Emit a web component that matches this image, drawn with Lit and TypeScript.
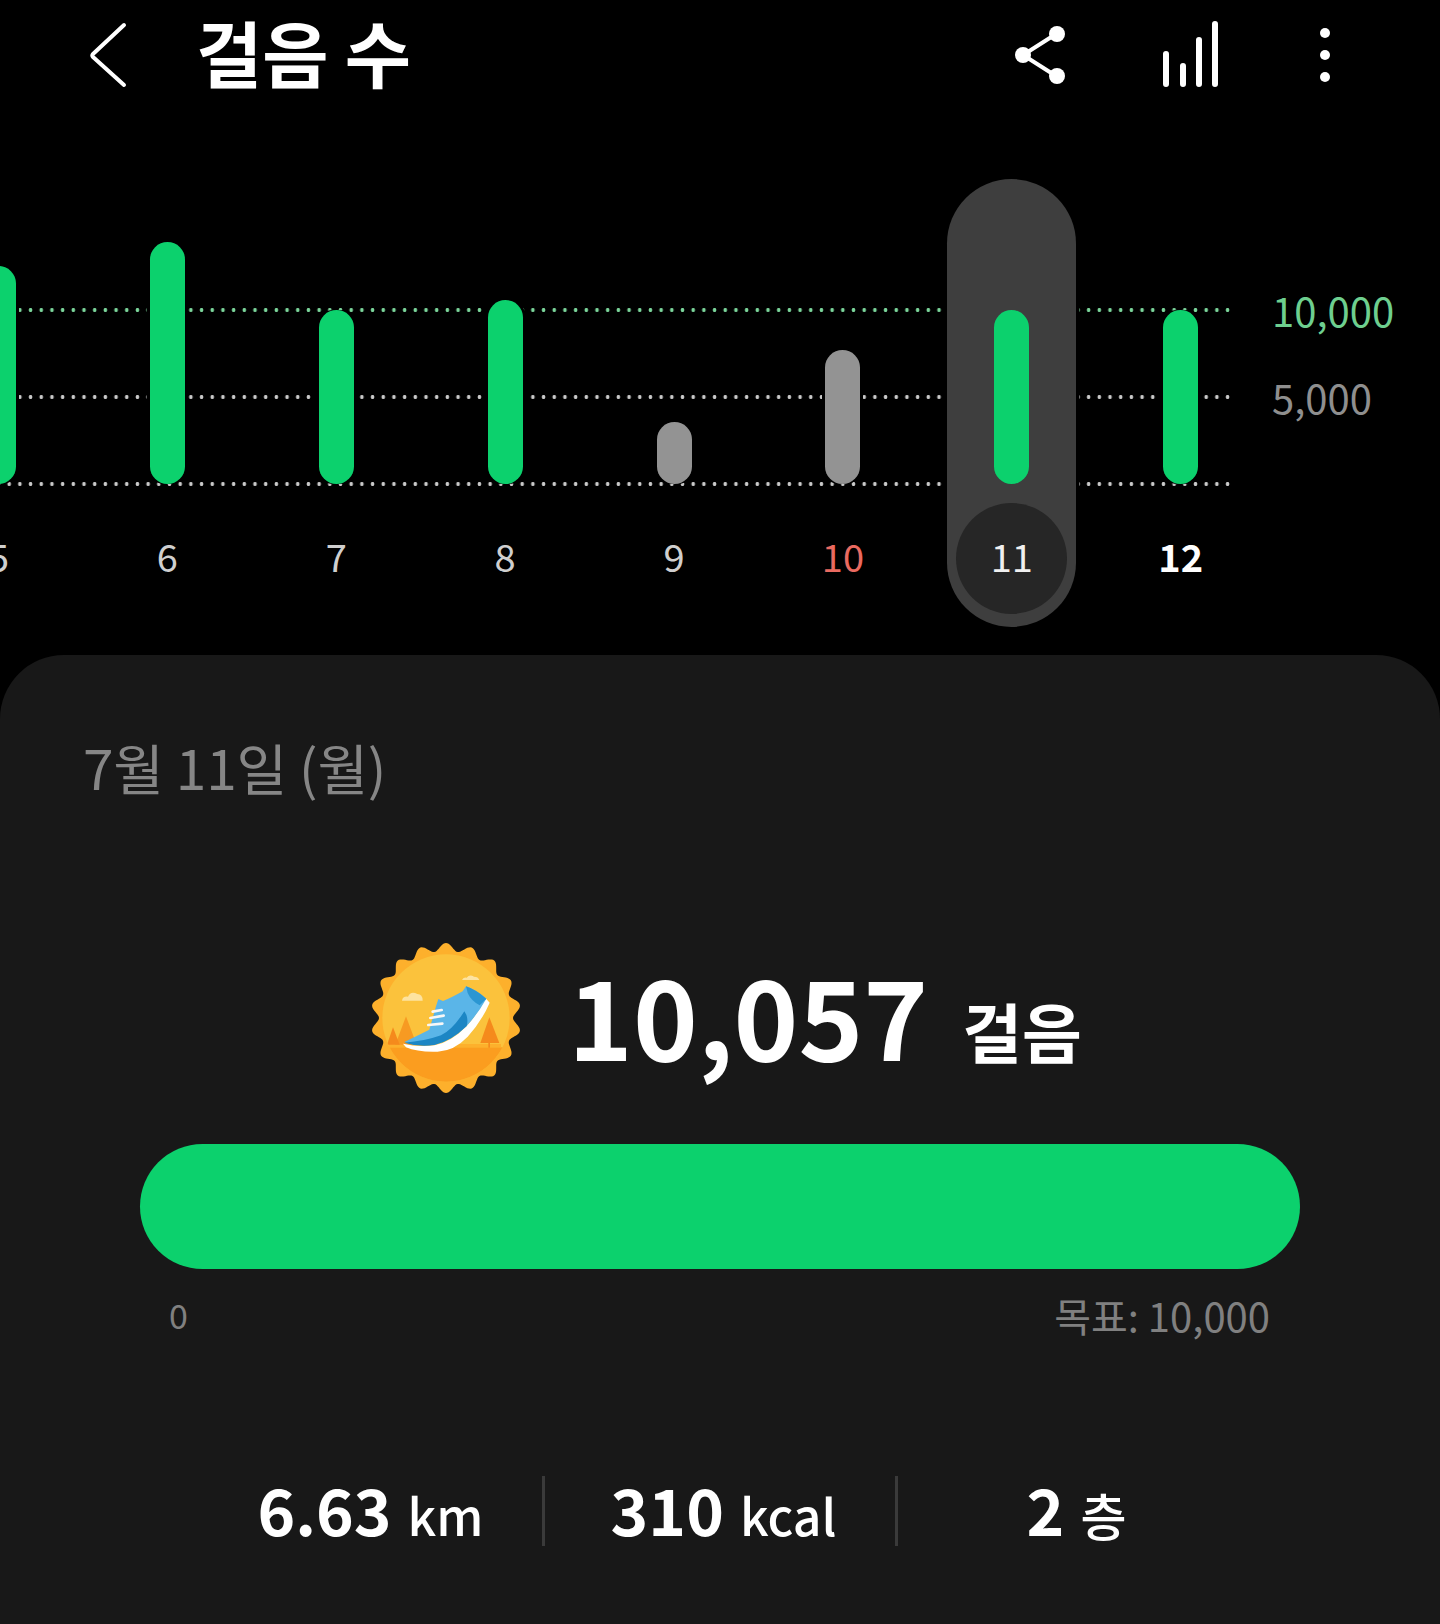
import { LitElement, html, css, svg } from "lit";
import { customElement } from "lit/decorators.js";

const days = [
  { label: "5", height: 218, tone: "green" },
  { label: "6", height: 242, tone: "green" },
  { label: "7", height: 174, tone: "green" },
  { label: "8", height: 184, tone: "green" },
  { label: "9", height: 62, tone: "grey" },
  { label: "10", height: 134, tone: "grey", cls: "sunday" },
  { label: "11", height: 174, tone: "green", cls: "selected" },
  { label: "12", height: 174, tone: "green", cls: "today" },
];

// wavy rim of the medal, in the 600x510 space of the badge
function rimPoints() {
  const pts: string[] = [];
  for (let i = 0; i < 360; i++) {
    const a = (i * Math.PI) / 180;
    const r = 213 + 12 * Math.cos(18 * a);
    pts.push(`${(285 + r * Math.sin(a)).toFixed(1)},${(270 - r * Math.cos(a)).toFixed(1)}`);
  }
  return pts.join(" ");
}

const badge = html`<svg class="badge" viewBox="0 0 600 510" aria-hidden="true">
  <defs>
    <clipPath id="disc"><circle cx="285" cy="270" r="191"></circle></clipPath>
  </defs>
  <polygon points=${rimPoints()} fill="#fdb02c"></polygon>
  <g clip-path="url(#disc)">
    <rect width="600" height="510" fill="#fbc23c"></rect>
    ${svg`
      <rect y="358" width="600" height="160" fill="#fb9d1f"></rect>
      <rect x="100" y="348" width="350" height="10" fill="#fdb02c"></rect>
      <polygon points="165,265 133,350 197,350" fill="#f79a22"></polygon>
      <polygon points="126,298 108,350 146,350" fill="#f58a1c"></polygon>
      <polygon points="415,268 388,345 445,345" fill="#f58a1c"></polygon>
      <rect x="412" y="345" width="5" height="14" fill="#f58a1c"></rect>
      <path d="M153 218 q2 -14 18 -12 q8 -18 28 -8 q16 0 16 20 z" fill="#fde3a0"></path>
      <path d="M333 156 q4 -10 14 -7 q9 -12 22 -3 q13 0 16 10 z" fill="#fde3a0"></path>
    `}
  </g>
  ${svg`
    <path d="M156 347 Q200 358 250 352 Q300 342 345 296 Q380 258 404 211 L416 224 Q392 280 350 326 Q310 368 260 371 Q200 373 165 358 Z" fill="#fff"></path>
    <path d="M160 342 Q195 325 235 305 Q245 270 255 235 L262 213 L276 219 Q300 210 335 190 L345 175 Q375 185 406 212 Q380 258 347 294 Q300 340 250 350 Q200 356 160 342 Z" fill="#5ab5e8"></path>
    <path d="M160 344 Q220 340 270 322 Q305 305 340 250 Q354 270 347 294 Q300 340 250 351 Q200 357 160 344 Z" fill="#1c86c4"></path>
    <path d="M345 175 Q375 185 406 212 L386 232 Q360 218 350 195 Z" fill="#2b96d2"></path>
    <path d="M232 291 L274 287 M238 270 L278 263 M245 251 L272 246" stroke="#f7f7f7" stroke-width="8" stroke-linecap="round" fill="none"></path>
  `}
</svg>`;

@customElement("app-root")
export class AppRoot extends LitElement {
  static styles = css`
    :host {
      display: flex;
      flex-direction: column;
      width: 1440px;
      height: 1624px;
      overflow: hidden;
      background: #000;
      color: #fff;
      font-family: "Noto Sans CJK KR", sans-serif;
    }
    .header {
      height: 130px;
      flex: none;
      display: flex;
      align-items: center;
      padding-left: 88px;
      box-sizing: border-box;
      padding-bottom: 20px;
    }
    .back {
      width: 40px;
      height: 66px;
      margin-right: 68px;
    }
    .title {
      flex: 1;
      font-size: 72px;
      font-weight: 700;
      line-height: 1.3;
      margin-bottom: 8px;
    }
    .actions {
      display: flex;
      align-items: center;
      margin-right: 108px;
    }
    .actions svg {
      display: block;
    }
    .share {
      width: 56px;
      height: 64px;
      margin-right: 92px;
    }
    .levels {
      width: 62px;
      height: 70px;
      margin-right: 96px;
    }
    .more {
      width: 14px;
      height: 60px;
    }

    .chart {
      position: relative;
      height: 525px;
      flex: none;
    }
    .guide {
      position: absolute;
      left: 0;
      display: flex;
      align-items: center;
      height: 4px;
      gap: 40px;
      font-size: 40px;
      line-height: 1;
    }
    .guide .dots {
      width: 1232px;
      height: 4px;
      background-image: radial-gradient(circle at center, #c9c9c9 1.7px, transparent 2.1px);
      background-size: 10.7px 4px;
      background-position: 3.85px 0;
    }
    .guide.goal .dots {
      background-image: radial-gradient(circle at center, #7bd69b 1.7px, transparent 2.1px);
    }
    .guide .value {
      color: #8f8f8f;
    }
    .guide.goal .value {
      color: #6ecf8f;
    }
    .g1 { top: 178px; }
    .g2 { top: 265px; }
    .g3 { top: 352px; }

    .days {
      position: relative;
      display: flex;
      margin-left: -86px;
      height: 100%;
    }
    .day {
      position: relative;
      flex: none;
      width: 168.9px;
      display: flex;
      flex-direction: column;
      align-items: center;
    }
    .day.selected::before {
      content: "";
      position: absolute;
      top: 49px;
      left: 50%;
      width: 129px;
      height: 448px;
      margin-left: -65px;
      border-radius: 65px;
      background: #3e3e3e;
      box-shadow: 3px 0 0 #000;
    }
    .day.selected::after {
      content: "";
      position: absolute;
      top: 373px;
      left: 50%;
      width: 111px;
      height: 111px;
      margin-left: -56px;
      border-radius: 50%;
      background: #262626;
    }
    .slot {
      height: 354px;
      flex: none;
      display: flex;
      align-items: flex-end;
      position: relative;
      z-index: 1;
    }
    .bar {
      width: 35px;
      border-radius: 18px;
      box-shadow: 3px 0 0 #000, -3px 0 0 #000;
    }
    .bar.green { background: #0cd16d; }
    .bar.grey { background: #939393; }
    .selected .bar { box-shadow: none; }
    .label {
      position: relative;
      z-index: 1;
      height: 144px;
      display: flex;
      align-items: center;
      font-size: 38px;
      color: #cfcfcf;
      line-height: 1;
    }
    .sunday .label { color: #ea6a60; }
    .selected .label { color: #f0f0f0; }
    .today .label { color: #fff; font-weight: 700; }

    .panel {
      flex: 1;
      background: #181818;
      border-radius: 64px 64px 0 0;
      display: flex;
      flex-direction: column;
      padding-top: 79px;
    }
    .date {
      margin-left: 83px;
      font-size: 55px;
      line-height: 64px;
      color: #868686;
      letter-spacing: -0.2px;
    }
    .summary {
      display: flex;
      align-items: center;
      padding-left: 351px;
      margin-top: 140px;
      height: 150px;
    }
    .badge {
      width: 200px;
      height: 170px;
      flex: none;
      margin-right: 17px;
    }
    .count {
      font-size: 110px;
      font-weight: 700;
      line-height: 1;
      margin-right: 34px;
    }
    .unit {
      font-size: 65px;
      font-weight: 700;
      line-height: 1;
      padding-top: 34px;
    }
    .progress {
      margin: 56px 140px 0;
      height: 125px;
      border-radius: 63px;
      background: #0cd16d;
    }
    .scale {
      display: flex;
      justify-content: space-between;
      align-items: center;
      margin: 24px 170px 0 169px;
      font-size: 40px;
      line-height: 44px;
      color: #808080;
    }
    .scale .zero {
      font-size: 34px;
    }
    .stats {
      display: grid;
      grid-template-columns: repeat(3, 353px);
      justify-content: center;
      margin: 139px 4px 0 0;
    }
    .stat {
      height: 70px;
      display: flex;
      align-items: baseline;
      justify-content: center;
      gap: 16px;
      line-height: 64px;
      font-size: 64px;
      font-weight: 700;
      padding-left: 8px;
      border-left: 3px solid transparent;
      box-sizing: border-box;
    }
    .stat + .stat {
      border-left-color: #3a3a3a;
    }
    .stat small {
      font-size: 50px;
      font-weight: 500;
    }
  `;

  render() {
    return html`
      <div class="header">
        <svg class="back" viewBox="0 0 40 66" fill="none" stroke="#fff" stroke-width="4" stroke-linecap="round" stroke-linejoin="round">
          <path d="M36 3 L5 32 Q3.500 33.500 5 35 L36 63"></path>
        </svg>
        <div class="title">걸음 수</div>
        <div class="actions">
          <svg class="share" viewBox="0 0 56 64" fill="#fff" stroke="#fff" stroke-width="4">
            <path d="M44 11 L11 32 L44 53" fill="none"></path>
            <circle cx="11" cy="32" r="8" stroke="none"></circle>
            <circle cx="45" cy="11" r="8" stroke="none"></circle>
            <circle cx="45" cy="53" r="8" stroke="none"></circle>
          </svg>
          <svg class="levels" viewBox="0 0 62 70" stroke="#fff" stroke-width="6" stroke-linecap="round">
            <path d="M6 34 V64 M23 46 V64 M39 20 V64 M55 4 V64"></path>
          </svg>
          <svg class="more" viewBox="0 0 14 60" fill="#fff">
            <circle cx="7" cy="8" r="5"></circle>
            <circle cx="7" cy="30" r="5"></circle>
            <circle cx="7" cy="52" r="5"></circle>
          </svg>
        </div>
      </div>

      <div class="chart">
        <div class="guide goal g1"><span class="dots"></span><span class="value">10,000</span></div>
        <div class="guide g2"><span class="dots"></span><span class="value">5,000</span></div>
        <div class="guide g3"><span class="dots"></span></div>
        <div class="days">
          ${days.map(
            (d) => html`<div class="day ${d.cls ?? ""}">
              <div class="slot"><div class="bar ${d.tone}" style="height:${d.height}px"></div></div>
              <div class="label">${d.label}</div>
            </div>`
          )}
        </div>
      </div>

      <div class="panel">
        <div class="date">7월 11일 (월)</div>
        <div class="summary">
          ${badge}
          <div class="count">10,057</div>
          <div class="unit">걸음</div>
        </div>
        <div class="progress"></div>
        <div class="scale"><span class="zero">0</span><span>목표: 10,000</span></div>
        <div class="stats">
          <div class="stat">6.63<small>km</small></div>
          <div class="stat">310<small>kcal</small></div>
          <div class="stat">2<small>층</small></div>
        </div>
      </div>
    `;
  }
}
